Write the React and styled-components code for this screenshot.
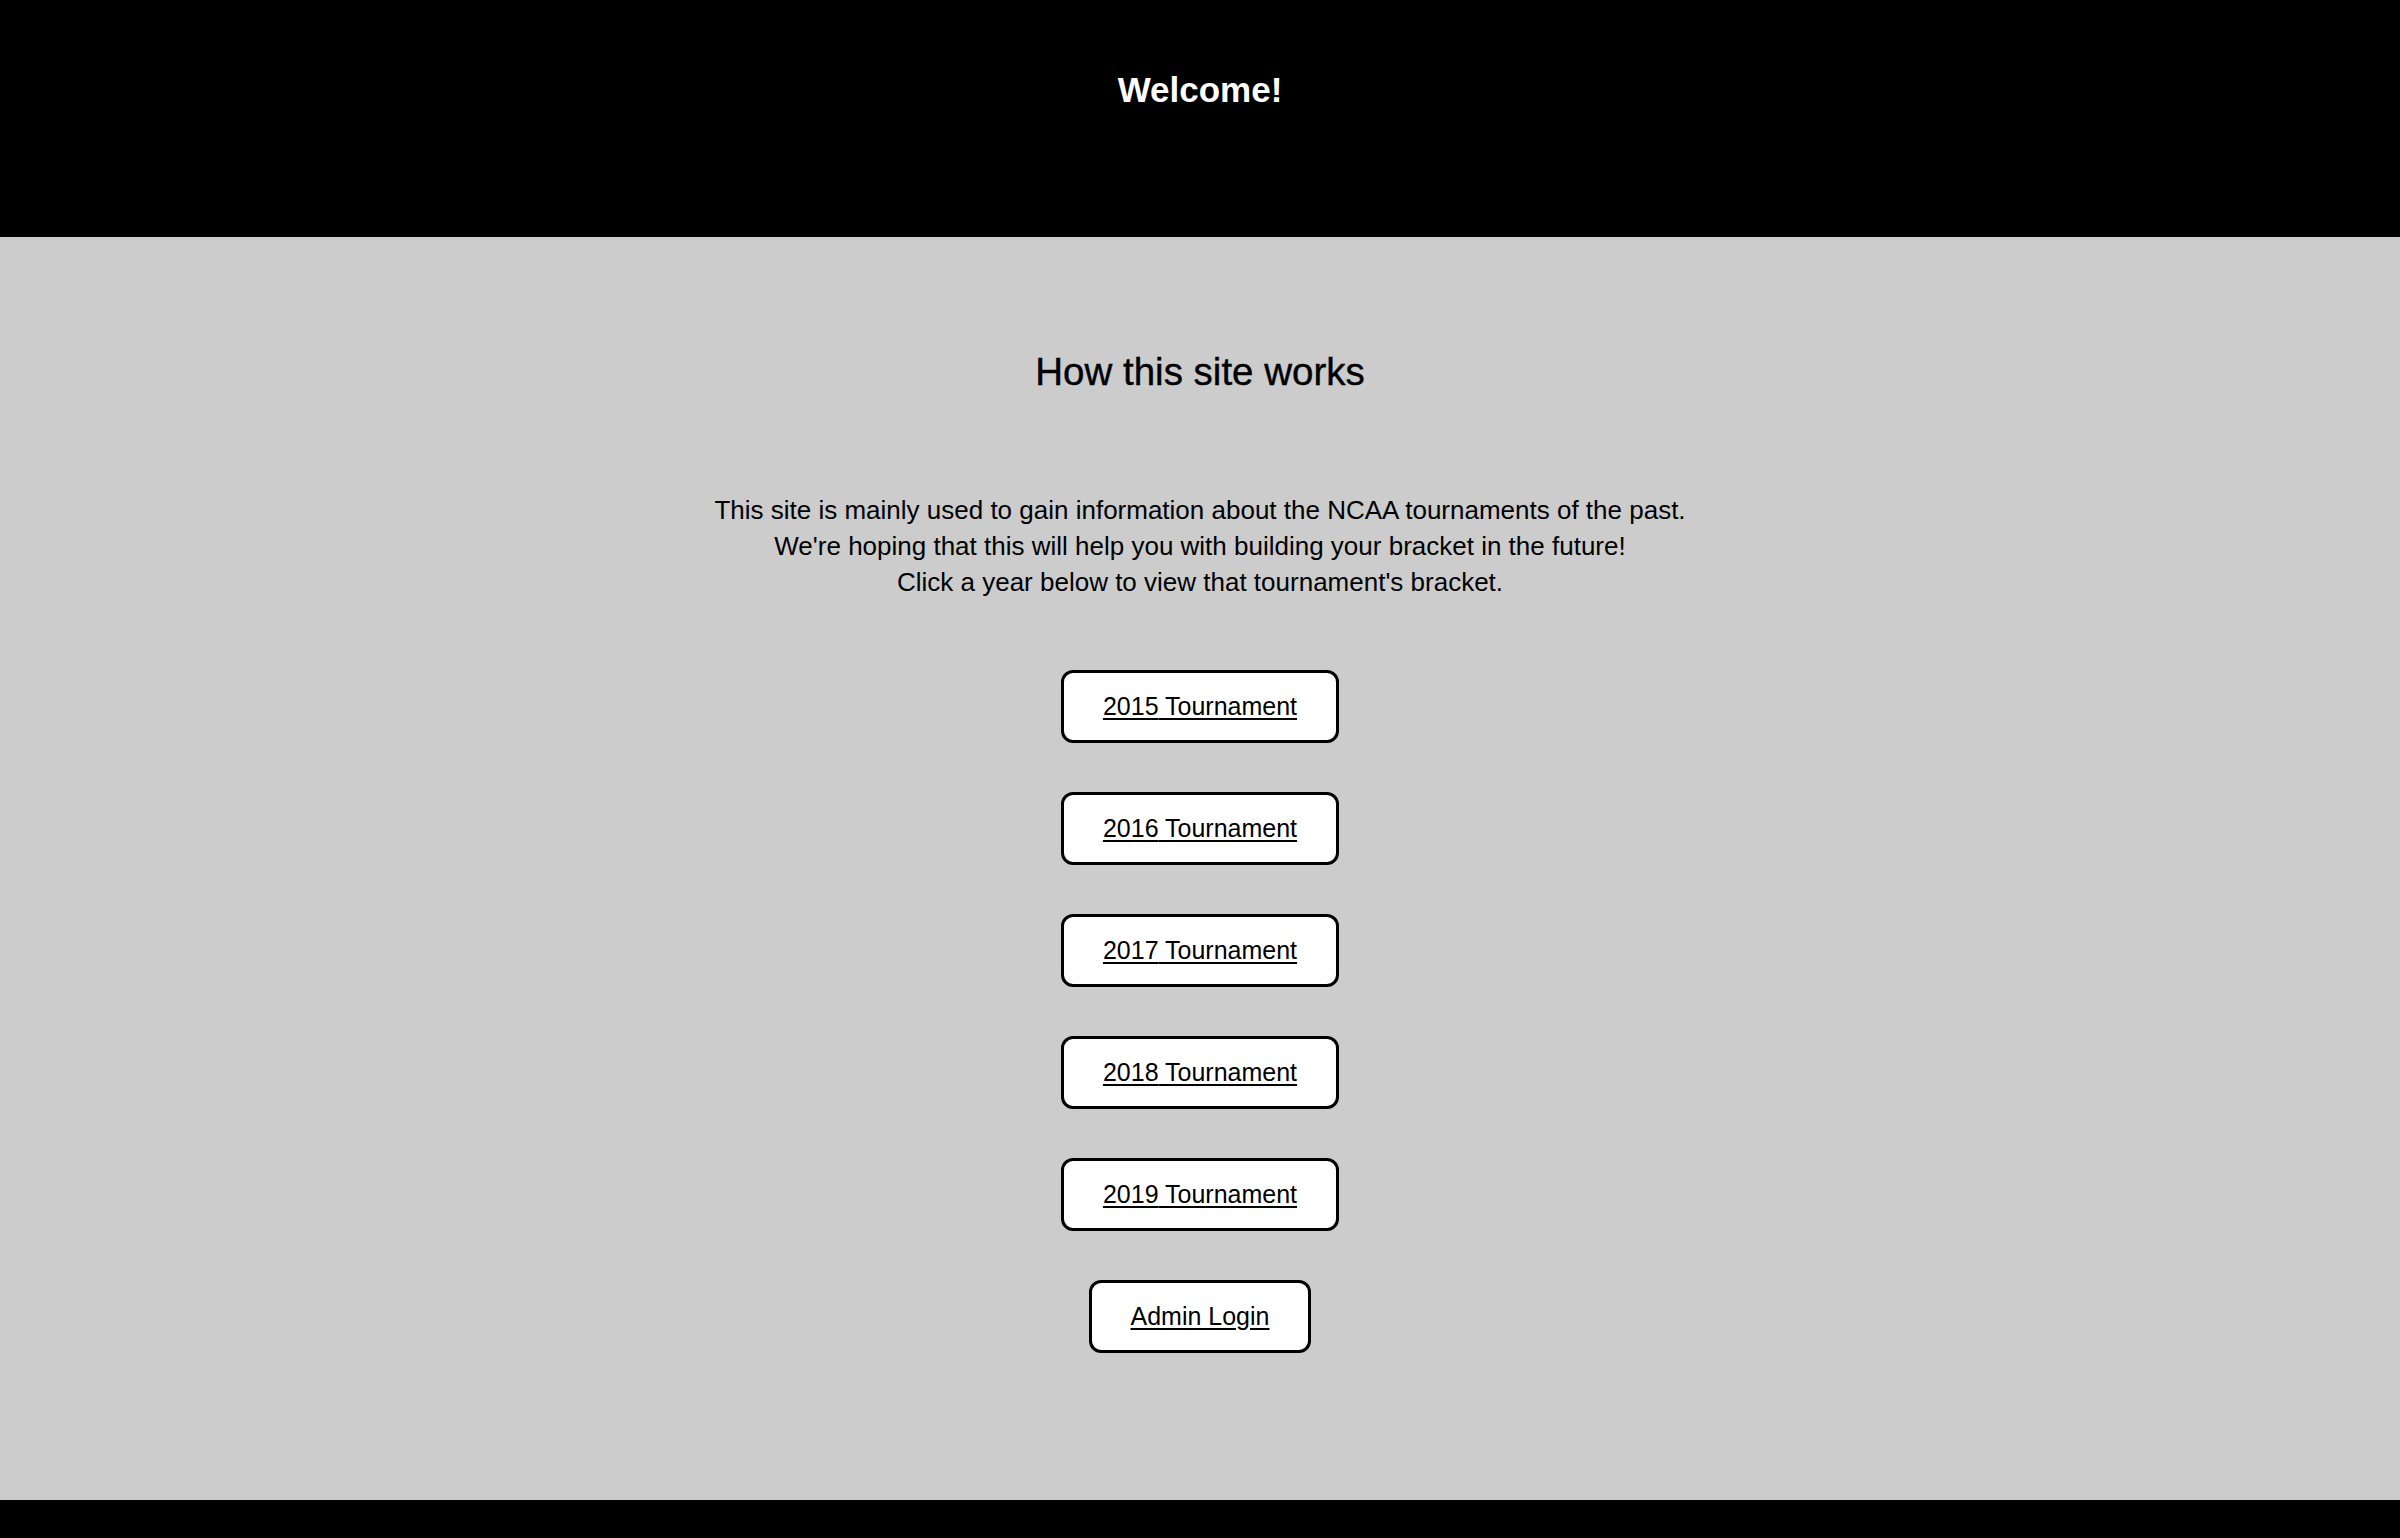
import React from 'react';
import styled, { createGlobalStyle } from 'styled-components';

const GlobalStyle = createGlobalStyle`
  html, body {
    margin: 0;
    padding: 0;
    background-color: #000000;
    font-family: "Liberation Sans", Arial, sans-serif;
  }
`;

const Header = styled.header`
  height: 237px;
  box-sizing: border-box;
  padding-top: 69px;
  background-color: #000000;
  color: #ffffff;
  text-align: center;
`;

const Title = styled.h1`
  margin: 0;
  font-size: 35px;
  line-height: 42px;
  font-weight: bold;
`;

const Main = styled.main`
  background-color: #cccccc;
  color: #000000;
  display: flex;
  flex-direction: column;
  align-items: center;
  padding: 113px 0 147px;
`;

const SectionTitle = styled.h2`
  margin: 0 0 98px;
  font-size: 38.5px;
  line-height: 44px;
  font-weight: normal;
  -webkit-text-stroke: 0.4px #000000;
`;

const Intro = styled.p`
  margin: 0 0 70px;
  font-size: 26px;
  line-height: 36px;
  text-align: center;
`;

const LinkList = styled.nav`
  display: flex;
  flex-direction: column;
  align-items: center;
  gap: 49px;
`;

const LinkButton = styled.a`
  display: block;
  padding: 19px 39px 20px;
  background-color: #ffffff;
  border: 3px solid #000000;
  border-radius: 12px;
  color: #000000;
  font-size: 25px;
  line-height: 28px;
  text-decoration: underline;
  text-underline-offset: 3px;
`;

const Footer = styled.footer`
  height: 80px;
  background-color: #000000;
`;

const years = [2015, 2016, 2017, 2018, 2019];

export default function App() {
  return (
    <>
      <GlobalStyle />
      <Header>
        <Title>Welcome!</Title>
      </Header>
      <Main>
        <SectionTitle>How this site works</SectionTitle>
        <Intro>
          This site is mainly used to gain information about the NCAA tournaments of the past.
          <br />
          We're hoping that this will help you with building your bracket in the future!
          <br />
          Click a year below to view that tournament's bracket.
        </Intro>
        <LinkList>
          {years.map((year) => (
            <LinkButton key={year} href={`#${year}`}>
              {year} Tournament
            </LinkButton>
          ))}
          <LinkButton href="#admin">Admin Login</LinkButton>
        </LinkList>
      </Main>
      <Footer />
    </>
  );
}
